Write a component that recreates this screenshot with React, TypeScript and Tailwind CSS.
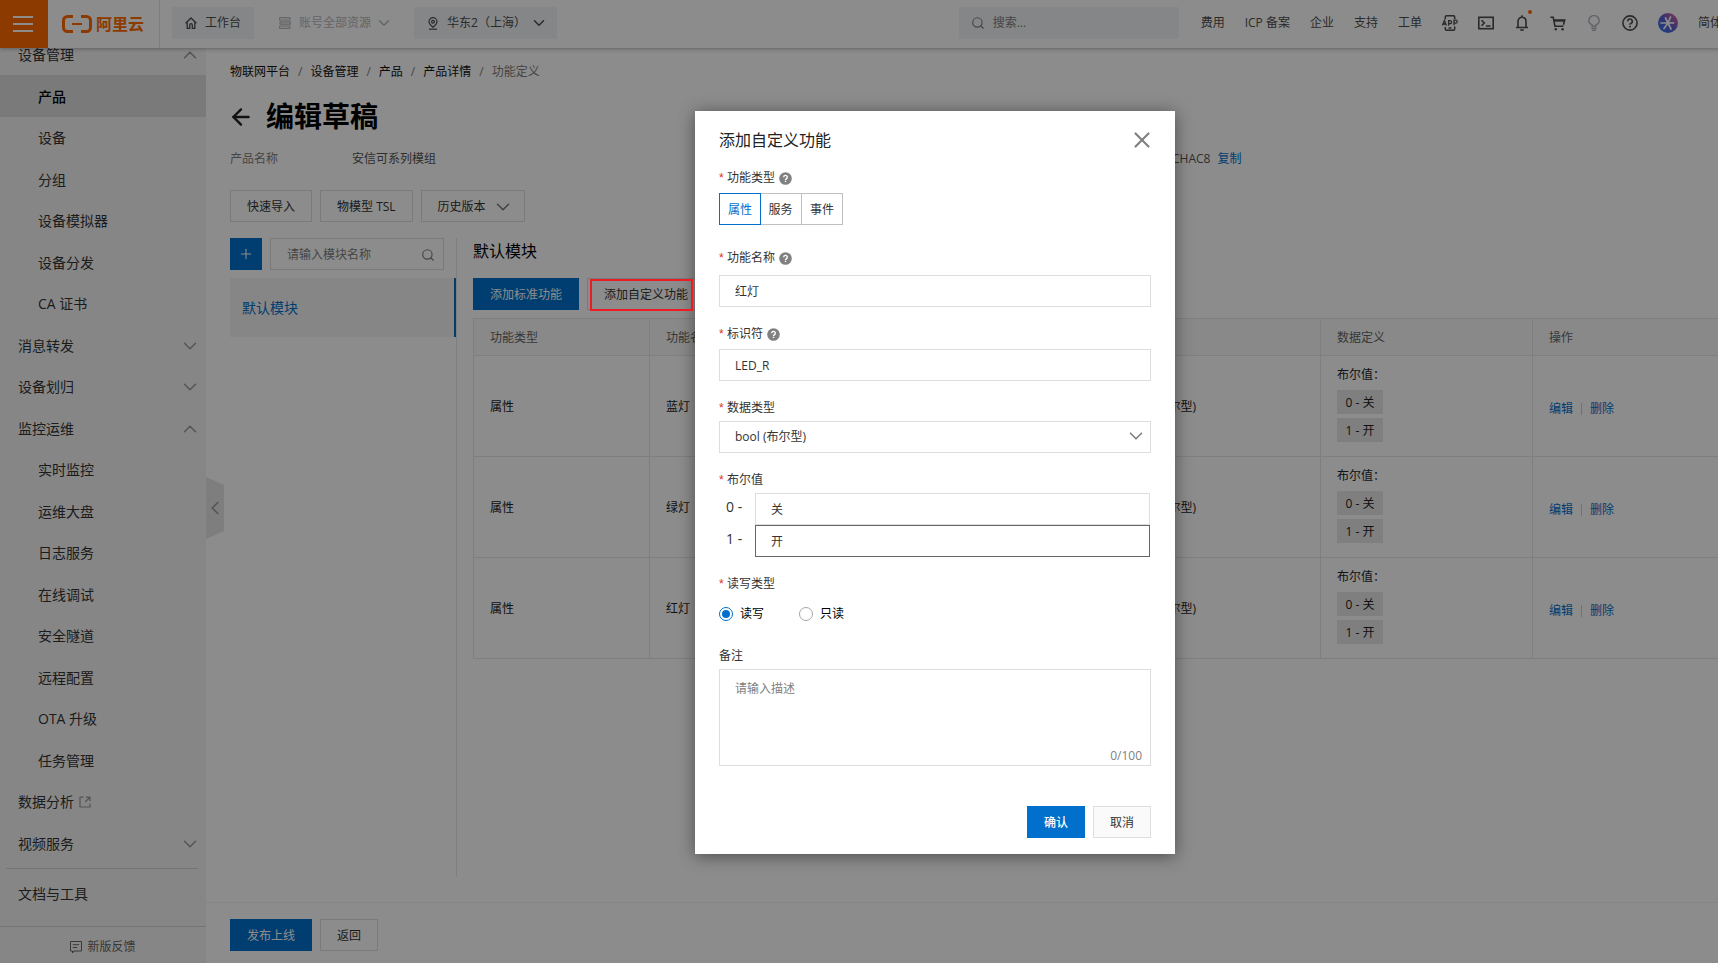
import React from "react";
import { ArrowLeft, ChevronDown, ChevronLeft, ChevronUp, Plus, Search, X } from "lucide-react";

type NavEntry = {
  label: string;
  sub?: boolean;
  active?: boolean;
  external?: boolean;
  arrow?: "up" | "down";
};

const NAV: NavEntry[] = [
  { label: "产品", sub: true, active: true },
  { label: "设备", sub: true },
  { label: "分组", sub: true },
  { label: "设备模拟器", sub: true },
  { label: "设备分发", sub: true },
  { label: "CA 证书", sub: true },
  { label: "消息转发", arrow: "down" },
  { label: "设备划归", arrow: "down" },
  { label: "监控运维", arrow: "up" },
  { label: "实时监控", sub: true },
  { label: "运维大盘", sub: true },
  { label: "日志服务", sub: true },
  { label: "在线调试", sub: true },
  { label: "安全隧道", sub: true },
  { label: "远程配置", sub: true },
  { label: "OTA 升级", sub: true },
  { label: "任务管理", sub: true },
  { label: "数据分析", external: true },
  { label: "视频服务", arrow: "down" },
];

const ROWS = [
  { type: "属性", name: "蓝灯", id: "LED_B" },
  { type: "属性", name: "绿灯", id: "LED_G" },
  { type: "属性", name: "红灯", id: "LED_R" },
];

const TOP_LINKS = ["费用", "ICP 备案", "企业", "支持", "工单"];

function Logo() {
  return (
    <svg width="30" height="18" viewBox="0 0 30 18" fill="none" stroke="#ff6a00" strokeWidth="3">
      <path d="M11 1.5H5.5A4 4 0 0 0 1.5 5.5v7a4 4 0 0 0 4 4H11" />
      <path d="M19 1.5h5.500a4 4 0 0 1 4 4v7a4 4 0 0 1-4 4H19" />
      <path d="M10 9h10" strokeWidth="2" />
    </svg>
  );
}

function HomeIcon() {
  return (
    <svg width="12" height="12" viewBox="0 0 12 12" fill="none" stroke="currentColor" strokeWidth="1.3">
      <path d="M.6 6.300 6 1l5.400 5.300M2.200 5.500v5.800h2.500V8a1.300 1.300 0 0 1 2.600 0v3.300h2.500V5.500" />
    </svg>
  );
}

function StackIcon() {
  return (
    <svg width="12" height="12" viewBox="0 0 12 12" fill="none" stroke="currentColor" strokeWidth="1.2">
      <rect x=".5" y=".6" width="10.500" height="2.400" rx=".6" />
      <rect x="1" y="4.800" width="10.500" height="2.400" rx=".6" />
      <rect x=".5" y="9" width="10.500" height="2.400" rx=".6" />
    </svg>
  );
}

function PinIcon() {
  return (
    <svg width="12" height="13" viewBox="0 0 12 13" fill="none" stroke="currentColor" strokeWidth="1.200">
      <path d="M6 10.200C3.600 8.300 2 6.700 2 4.700a4 4 0 0 1 8 0c0 2-1.600 3.600-4 5.500Z" />
      <circle cx="6" cy="4.700" r="1.400" />
      <path d="M2 12.200h8" />
    </svg>
  );
}

function AppIcon() {
  return (
    <svg width="16" height="16" viewBox="0 0 16 16" fill="none" stroke="currentColor" strokeWidth="1.500">
      <path d="M3.300 4.300V2c0-.7.500-1.200 1.200-1.200h7c.7 0 1.200.5 1.200 1.200v2M3.300 12v2c0 .7.500 1.200 1.200 1.200h7c.7 0 1.200-.5 1.200-1.200v-2.500M6.500 13h3" />
      <path d="M.4 10.500 2.400 5.500l2 5M1.200 9h2.400M6.600 10.800V5.700h1.500a1.500 1.500 0 0 1 0 3H6.600M12 10.300V5.200h1.700a1.500 1.500 0 0 1 0 3H12" strokeWidth="1.300" />
    </svg>
  );
}

function TerminalIcon() {
  return (
    <svg width="16" height="16" viewBox="0 0 16 16" fill="none" stroke="currentColor" strokeWidth="1.600">
      <rect x=".8" y="2.300" width="14.400" height="11.400" />
      <path d="m3.500 5.200 2.800 2.800-2.800 2.800M8 11h4.500" />
    </svg>
  );
}

function BellIcon() {
  return (
    <svg width="16" height="16" viewBox="0 0 16 16" fill="none" stroke="currentColor" strokeWidth="1.600">
      <path d="M8 .2v2M4 12V6.600C4 4.100 5.600 2.300 8 2.300s4 1.800 4 4.300V12M2 12.500h12M6.200 15h3.600" />
    </svg>
  );
}

function CartIcon() {
  return (
    <svg width="16" height="16" viewBox="0 0 16 16" fill="none" stroke="currentColor" strokeWidth="1.600">
      <path d="M.3 2.300h2.900L5 11.200h8.500M3.800 5h10.900l-1.300 4.800" />
      <path d="M3.900 5.800h10.500" strokeWidth="1.800" />
      <circle cx="5.800" cy="14.200" r="1.200" fill="currentColor" stroke="none" />
      <circle cx="12.600" cy="14.200" r="1.200" fill="currentColor" stroke="none" />
    </svg>
  );
}

function BulbIcon() {
  return (
    <svg width="16" height="16" viewBox="0 0 16 16" fill="none" stroke="#b4b9c0" strokeWidth="1.500">
      <path d="M6.200 11.300V10C4 9 2.800 7.700 2.800 5.800a5.200 5.200 0 0 1 10.400 0c0 1.900-1.200 3.200-3.400 4.200v1.300ZM5.200 13.200h5.600M6 15.300h4" />
    </svg>
  );
}

function HelpIcon() {
  return (
    <svg width="16" height="16" viewBox="0 0 16 16" fill="none" stroke="currentColor" strokeWidth="1.600">
      <circle cx="8" cy="8" r="7.100" />
      <path d="M5.700 6.300a2.300 2.300 0 1 1 3.200 2.100c-.6.3-.9.6-.9 1.300M8 10.800v1.600" />
    </svg>
  );
}

function AvatarIcon() {
  return (
    <svg width="20" height="20" viewBox="0 0 20 20">
      <defs>
        <linearGradient id="avatar" x1="1" y1="0" x2="0" y2="1">
          <stop offset="0.1" stopColor="#e0609a" />
          <stop offset=".5" stopColor="#5a5fd0" />
          <stop offset="1" stopColor="#2f78f0" />
        </linearGradient>
      </defs>
      <circle cx="10" cy="10" r="10" fill="url(#avatar)" />
      <path d="M10 10H3M10 10l-2.500-5M10 10l2.500-6M10 10l5.500-.2M10 10l-4 5.500M10 10l3 6" stroke="#fff" strokeWidth="1.700" strokeLinecap="round" />
    </svg>
  );
}

function ExternalIcon() {
  return (
    <svg width="12" height="12" viewBox="0 0 12 12" fill="none" stroke="#999" strokeWidth="1.200">
      <path d="M4.500 1.200H1v9.800h10V7.500M7 1.200h4v4M11 1.200 6.200 6" />
    </svg>
  );
}

function FeedbackIcon() {
  return (
    <svg width="12" height="13" viewBox="0 0 12 13" fill="none" stroke="currentColor" strokeWidth="1">
      <path d="M.5.5h11v9.500H4L2.500 12V10h-2ZM2.800 3.700h6.400M2.800 6.500h4.500" />
    </svg>
  );
}

function Hint() {
  return (
    <svg width="13" height="13" viewBox="0 0 13 13" fill="none">
      <circle cx="6.500" cy="6.500" r="6.300" fill="#808080" />
      <path d="M4.700 5.200a1.800 1.800 0 1 1 2.600 1.600c-.6.3-.8.5-.8 1.100M6.500 8.700V10" stroke="#fff" strokeWidth="1.400" />
    </svg>
  );
}

function Header() {
  const pill = "flex h-8 items-center gap-2 rounded-[2px] px-[13px]";
  return (
    <header className="relative z-10 flex h-12 shrink-0 items-center bg-white text-[#4d4d4d] shadow-[0_1px_4px_rgba(0,0,0,0.3)]">
      <button aria-label="菜单" className="flex h-12 w-12 flex-col items-start justify-center gap-[5px] bg-[#ff6a00] pl-[13px]">
        <span className="h-[2px] w-5 bg-white" />
        <span className="h-[2px] w-5 bg-white" />
        <span className="h-[2px] w-5 bg-white" />
      </button>
      <a href="#home" className="flex h-12 w-28 items-center gap-1 border-r border-[#e3e3e3] pl-[14px] text-[16px] font-bold leading-5 text-[#ff6a00]">
        <Logo />
        阿里云
      </a>
      <div className="flex gap-3 pb-[2px] pl-3">
        <button className={pill + " bg-[#f2f4f6]"}>
          <HomeIcon />
          工作台
        </button>
        <button className={pill + " text-[#b5b8bc]"}>
          <StackIcon />
          账号全部资源
          <ChevronDown size={18} strokeWidth={2} className="-mx-1" />
        </button>
        <button className={pill + " bg-[#f2f4f6]"}>
          <PinIcon />
          华东2（上海）
          <ChevronDown size={18} strokeWidth={2} className="-mx-1" />
        </button>
      </div>
      <div className="ml-auto flex items-center gap-5 pb-[2px] pr-[148px]">
        <label className="mr-[2px] flex h-8 w-[220px] items-center gap-2 rounded-[2px] bg-[#f2f4f6] px-3 text-[#808080]">
          <Search size={14} strokeWidth={2} />
          <input aria-label="搜索" placeholder="搜索..." className="w-40 bg-transparent outline-none placeholder:text-[#808080]" />
        </label>
        {TOP_LINKS.map((t) => (
          <a key={t} href="#top" className="whitespace-nowrap">
            {t}
          </a>
        ))}
        <button aria-label="App"><AppIcon /></button>
        <button aria-label="终端"><TerminalIcon /></button>
        <button aria-label="消息" className="relative">
          <BellIcon />
          <span className="absolute -right-[2px] -top-[5px] h-1 w-1 rounded-full bg-[#ff6a00]" />
        </button>
        <button aria-label="购物车"><CartIcon /></button>
        <button aria-label="提示"><BulbIcon /></button>
        <button aria-label="帮助"><HelpIcon /></button>
        <button aria-label="账号"><AvatarIcon /></button>
        <button className="whitespace-nowrap">简体</button>
      </div>
    </header>
  );
}

function Arrow({ dir }: { dir: "up" | "down" }) {
  const Icon = dir === "up" ? ChevronUp : ChevronDown;
  return <Icon size={22} strokeWidth={1.6} className="text-[#999]" />;
}

function Sidebar() {
  return (
    <aside className="relative flex w-[206px] shrink-0 flex-col bg-[#f5f5f5] text-[14px] text-[#333]">
      <div className="flex h-[27px] shrink-0 items-start justify-between pl-[18px] pr-[5px] leading-[14px]">
        <a href="#devices">设备管理</a>
        <span className="-mt-1"><Arrow dir="up" /></span>
      </div>
      <nav>
        <ul>
          {NAV.map((n) => (
            <li key={n.label} className="h-[42px] even:h-[41px]">
              <a
                href="#nav"
                className={
                  "flex h-full items-center pr-[5px] pt-px " +
                  (n.sub ? "pl-[38px] " : "pl-[18px] ") +
                  (n.active ? "bg-[#dedede] font-medium text-black" : "")
                }
              >
                {n.label}
                {n.external && <span className="ml-[5px]"><ExternalIcon /></span>}
                {n.arrow && <span className="ml-auto"><Arrow dir={n.arrow} /></span>}
              </a>
            </li>
          ))}
        </ul>
      </nav>
      <hr className="ml-[6px] mr-2 mt-1 border-[#d4d4d4]" />
      <a href="#docs" className="mt-1 flex h-[42px] items-center pl-[18px]">
        文档与工具
      </a>
      <button className="mt-auto flex h-[37px] items-center justify-center gap-[5px] border-t border-[#d4d4d4] pt-1 text-[12px] text-[#666]">
        <FeedbackIcon />
        新版反馈
      </button>
      <button
        aria-label="收起"
        className="absolute left-full top-[429px] flex h-[62px] w-[18px] items-center justify-center bg-[#e6e6e6] text-[#999] [clip-path:polygon(0_0,100%_8px,100%_54px,0_100%)]"
      >
        <ChevronLeft size={22} strokeWidth={1.8} className="shrink-0" />
      </button>
    </aside>
  );
}

const btn = "flex h-8 items-center justify-center whitespace-nowrap border border-[#dedede] px-4 pt-[2px] text-[#333]";
const primary = "flex h-8 items-center justify-center whitespace-nowrap border border-[#0070cc] bg-[#0070cc] px-4 pt-[2px] text-white";

function FeatureTable() {
  const cell = "border border-[#e8e8e8] px-4 pt-[2px]";
  return (
    <table className="mt-2 w-full table-fixed border-collapse text-left">
      <colgroup>
        <col className="w-[176px]" />
        <col className="w-[247px]" />
        <col className="w-[212px]" />
        <col className="w-[212px]" />
        <col className="w-[212px]" />
        <col />
      </colgroup>
      <thead>
        <tr className="h-[37px] bg-[#fafafa] text-[#666]">
          {["功能类型", "功能名称", "标识符", "数据类型", "数据定义", "操作"].map((h) => (
            <th key={h} className={cell + " font-normal"}>
              {h}
            </th>
          ))}
        </tr>
      </thead>
      <tbody>
        {ROWS.map((r) => (
          <tr key={r.name} className="h-[101px]">
            <td className={cell}>{r.type}</td>
            <td className={cell}>{r.name}</td>
            <td className={cell}>{r.id}</td>
            <td className={cell}>bool (布尔型)</td>
            <td className="border border-[#e8e8e8] px-4 pb-[14px] pt-[11px]">
              <p>布尔值：</p>
              <div className="mt-[7px] flex flex-col items-start gap-1">
                <span className="flex h-6 w-[46px] items-center justify-center bg-[#e8e8e8] pt-px">0 - 关</span>
                <span className="flex h-6 w-[46px] items-center justify-center bg-[#e8e8e8] pt-px">1 - 开</span>
              </div>
            </td>
            <td className={cell}>
              <div className="flex items-center gap-2 pt-1 text-[#0070cc]">
                <a href="#edit">编辑</a>
                <span className="h-3 w-px bg-[#d0d0d0]" />
                <a href="#delete">删除</a>
              </div>
            </td>
          </tr>
        ))}
      </tbody>
    </table>
  );
}

function Main() {
  return (
    <main className="flex min-w-0 flex-1 flex-col">
      <nav className="flex gap-2 pl-6 pt-4 text-[#111]">
        {["物联网平台", "设备管理", "产品", "产品详情"].map((c) => (
          <React.Fragment key={c}>
            <a href="#crumb">{c}</a>
            <span className="text-[#808080]">/</span>
          </React.Fragment>
        ))}
        <span className="text-[#808080]">功能定义</span>
      </nav>
      <div className="mt-[18px] flex items-center gap-3 pl-[22px]">
        <a href="#back" aria-label="返回" className="pt-[2px]">
          <ArrowLeft size={26} strokeWidth={2.2} className="text-[#222]" />
        </a>
        <h1 className="text-[28px] font-bold leading-9 text-black">编辑草稿</h1>
      </div>
      <dl className="mt-[17px] flex pl-6">
        <dt className="w-[122px] text-[#808080]">产品名称</dt>
        <dd className="w-[699px] text-[#555]">安信可系列模组</dd>
        <dt className="w-[121px] text-[#808080]">ProductKey</dt>
        <dd className="flex gap-[7px] text-[#555]">
          CHAC8
          <a href="#copy" className="text-[#0070cc]">复制</a>
        </dd>
      </dl>
      <div className="mt-[23px] flex gap-2 pl-6">
        <button className={btn}>快速导入</button>
        <button className={btn}>物模型 TSL</button>
        <button className={btn + " gap-[6px]"}>
          历史版本
          <ChevronDown size={22} strokeWidth={1.6} className="-mr-[6px] text-[#777]" />
        </button>
      </div>
      <div className="mt-4 flex min-h-0 flex-1 pl-6">
        <section className="w-[227px] shrink-0 border-r border-[#e8e8e8]">
          <div className="flex gap-2 pr-3">
            <button aria-label="新增模块" className="flex h-8 w-8 shrink-0 items-center justify-center bg-[#0070cc] text-white">
              <Plus size={16} strokeWidth={1.6} />
            </button>
            <label className="flex h-8 min-w-0 flex-1 items-center border border-[#dedede] pl-4 pr-2 pt-px">
              <input
                aria-label="模块名称"
                placeholder="请输入模块名称"
                className="min-w-0 flex-1 bg-transparent outline-none placeholder:text-[#808080]"
              />
              <Search size={14} strokeWidth={2} className="text-[#808080]" />
            </label>
          </div>
          <a
            href="#module"
            className="mt-2 flex h-[59px] items-center border-r-2 border-[#0070cc] bg-[#f5f5f5] pl-3 text-[14px] text-[#0070cc]"
          >
            默认模块
          </a>
        </section>
        <section className="min-w-0 flex-1 pl-4">
          <h2 className="pb-[14px] text-[16px] leading-[26px] text-black">默认模块</h2>
          <div className="flex gap-2">
            <button className={primary}>添加标准功能</button>
            <div className="relative">
              <button className={btn}>添加自定义功能</button>
              <span className="absolute left-[3px] top-px z-30 h-8 w-[103px] border-2 border-[#ed1c24]" />
            </div>
          </div>
          <FeatureTable />
        </section>
      </div>
      <footer className="mt-[25px] flex h-[61px] shrink-0 gap-2 border-t border-[#f2f2f2] pl-6 pt-4">
        <button className={primary}>发布上线</button>
        <button className={btn}>返回</button>
      </footer>
    </main>
  );
}

function FieldLabel({ text, htmlFor, hint, required = true }: { text: string; htmlFor?: string; hint?: boolean; required?: boolean }) {
  return (
    <div className="flex h-4 items-center">
      {required && <span className="w-2 font-['Liberation_Sans',sans-serif] text-[#d93026]">*</span>}
      <label htmlFor={htmlFor}>{text}</label>
      {hint && <span className="ml-1"><Hint /></span>}
    </div>
  );
}

function Radio({ label, on }: { label: string; on?: boolean }) {
  return (
    <label className="flex w-20 items-center gap-[7px] text-black">
      <input
        type="radio"
        name="access"
        defaultChecked={on}
        className="h-[14px] w-[14px] appearance-none rounded-full border border-[#a6a6a6] bg-white bg-clip-content p-[2px] checked:border-[#0070cc] checked:bg-[#0070cc]"
      />
      {label}
    </label>
  );
}

function Dialog() {
  const field = "block h-8 w-full border border-[#dedede] bg-white px-[15px] text-[#333] outline-none";
  const seg = "h-8 w-[42px] border";
  return (
    <div className="absolute inset-0 z-20 flex items-center justify-center bg-black/45 pt-[2px]">
      <div
        role="dialog"
        aria-labelledby="dialog-title"
        className="w-[480px] bg-white px-6 pb-4 pt-4 text-[#333] shadow-[0_2px_16px_rgba(0,0,0,0.45)]"
      >
        <div className="flex h-[26px] items-center justify-between">
          <h2 id="dialog-title" className="text-[16px] leading-[26px] text-[#222]">
            添加自定义功能
          </h2>
          <button aria-label="关闭" className="-mr-1 text-[#808080]">
            <X size={26} strokeWidth={2} />
          </button>
        </div>

        <div className="mt-[17px]">
          <FieldLabel text="功能类型" hint />
          <div className="mt-[7px] flex">
            <button className={seg + " relative border-[#0070cc] pt-px text-[#0070cc]"}>属性</button>
            <button className={seg + " -ml-px border-l-0 border-[#c0c0c0] pt-px"}>服务</button>
            <button className={seg + " -ml-px border-[#c0c0c0] pt-px"}>事件</button>
          </div>
        </div>

        <div className="mt-[25px]">
          <FieldLabel text="功能名称" htmlFor="name" hint />
          <input id="name" defaultValue="红灯" className={field + " mt-[9px]"} />
        </div>

        <div className="mt-[19px]">
          <FieldLabel text="标识符" htmlFor="ident" hint />
          <input id="ident" defaultValue="LED_R" className={field + " mt-[7px]"} />
        </div>

        <div className="mt-[19px]">
          <FieldLabel text="数据类型" htmlFor="dtype" />
          <div className="relative mt-[5px]">
            <select id="dtype" className={field + " appearance-none"}>
              <option>bool (布尔型)</option>
            </select>
            <ChevronDown size={22} strokeWidth={1.8} className="pointer-events-none absolute right-1 top-1 text-[#808080]" />
          </div>
        </div>

        <div className="mt-[19px]">
          <FieldLabel text="布尔值" htmlFor="bool0" />
          <div className="mt-[5px] flex items-start pr-px">
            <label htmlFor="bool0" className="w-9 shrink-0 pl-[7px] text-[14px] leading-[28px]">0 -</label>
            <input id="bool0" defaultValue="关" className={field} />
          </div>
          <div className="flex items-start pr-px">
            <label htmlFor="bool1" className="w-9 shrink-0 pl-[7px] text-[14px] leading-[28px]">1 -</label>
            <input
              id="bool1"
              defaultValue="开"
              className="block h-8 w-full border border-[#666] bg-white px-[15px] text-[#333] outline-none"
            />
          </div>
        </div>

        <div className="mt-[19px]">
          <FieldLabel text="读写类型" />
          <div className="mt-[14px] flex h-4 items-center">
            <Radio label="读写" on />
            <Radio label="只读" />
          </div>
        </div>

        <div className="mt-[26px]">
          <FieldLabel text="备注" htmlFor="remark" required={false} />
          <div className="relative mt-[5px]">
            <textarea
              id="remark"
              placeholder="请输入描述"
              className="block h-[97px] w-full resize-none border border-[#dedede] px-[15px] py-[11px] outline-none placeholder:text-[#808080]"
            />
            <span className="absolute bottom-[2px] right-[9px] text-[#808080]">0/100</span>
          </div>
        </div>

        <div className="mt-10 flex justify-end gap-2">
          <button className={primary + " font-medium"}>确认</button>
          <button className={btn + " bg-[#fafafa]"}>取消</button>
        </div>
      </div>
    </div>
  );
}

export default function App() {
  return (
    <div className="h-screen overflow-hidden bg-white font-['Open_Sans','Noto_Sans_CJK_SC',sans-serif] text-[12px] leading-4 text-[#222]">
      <div className="relative flex h-full w-[calc(100%+152px)] flex-col">
        <Header />
        <div className="flex min-h-0 flex-1">
          <Sidebar />
          <Main />
        </div>
        <Dialog />
      </div>
    </div>
  );
}
